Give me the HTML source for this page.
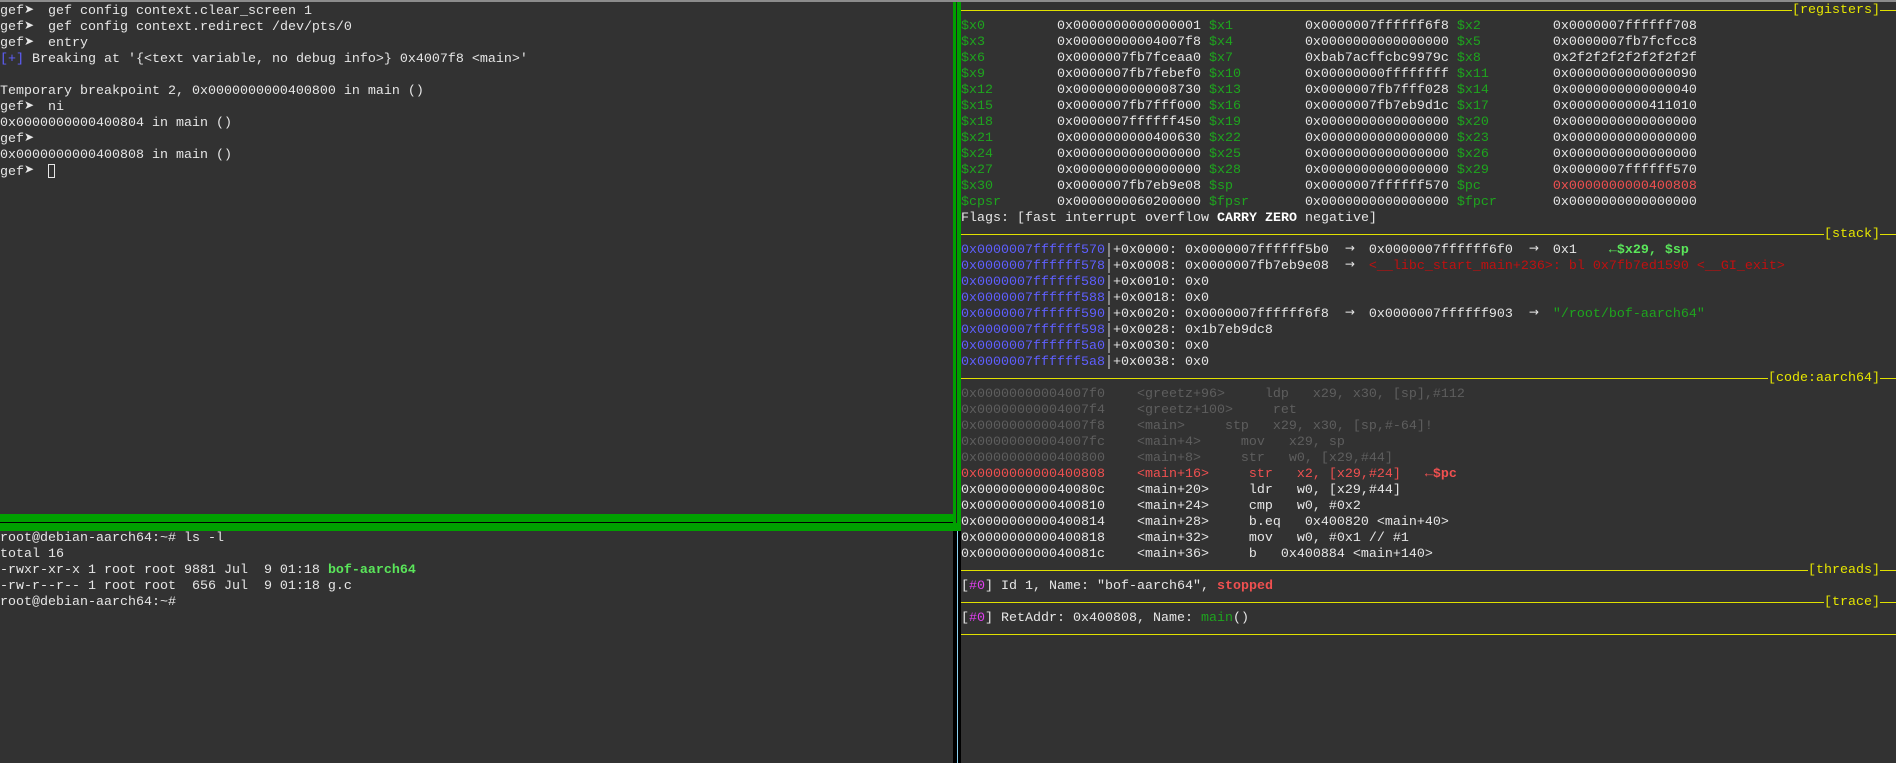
<!DOCTYPE html>
<html><head><meta charset="utf-8">
<style>
html,body{margin:0;padding:0;background:#323232;}
body{width:1896px;height:763px;position:relative;overflow:hidden;font-family:"Liberation Mono","DejaVu Sans Mono",monospace;font-size:13.333px;line-height:16px;color:#e6e6e6;}
.topbar{position:absolute;left:0;top:0;width:1896px;height:2px;background:#8c8c8c;}
pre{margin:0;font:inherit;white-space:pre;position:absolute;}
.g{color:#1ea51e}
.G{color:#5ae65a;font-weight:bold}
.b{color:#5f5fff}
.r{color:#f05050}
.R{color:#f05050;font-weight:bold}
.dr{color:#c01010}
.gr{color:#5e5e5e}
.m{color:#e040f0}
.bold{font-weight:bold;color:#fff}
.row{position:absolute;left:961px;width:935px;height:16px;overflow:hidden;white-space:pre;}
.hdr .ln{position:absolute;left:0;top:7px;width:935px;height:1px;background:#e0e000;}
.hdr .lab{position:absolute;right:16px;top:0;color:#e6e600;background:#323232;}
.cur{display:inline-block;width:7px;height:14px;border:1px solid #e6e6e6;box-sizing:border-box;vertical-align:-3px;}
.ar,.arr{display:inline-block;width:8px;height:16px;line-height:16px;vertical-align:top;position:relative;top:-3px;overflow:visible;font-family:"DejaVu Sans",sans-serif;font-size:12px;text-align:center;}
.ar{font-weight:bold;text-align:left;top:-3px;}
</style></head><body>
<div class="topbar"></div>

<pre style="left:0;top:4px;">gef<span class="ar">➤</span>  gef config context.clear_screen 1
gef<span class="ar">➤</span>  gef config context.redirect /dev/pts/0
gef<span class="ar">➤</span>  entry
<span class="b">[+]</span> Breaking at '{&lt;text variable, no debug info&gt;} 0x4007f8 &lt;main&gt;'

Temporary breakpoint 2, 0x0000000000400800 in main ()
gef<span class="ar">➤</span>  ni
0x0000000000400804 in main ()
gef<span class="ar">➤</span>  
0x0000000000400808 in main ()
gef<span class="ar">➤</span>  <span class="cur"></span></pre>

<div style="position:absolute;left:0;top:514px;width:953px;height:8px;background:#00a000"></div>
<div style="position:absolute;left:0;top:522px;width:956px;height:1px;background:#000"></div>
<div style="position:absolute;left:0;top:523px;width:961px;height:8px;background:#00a000"></div>

<div style="position:absolute;left:953px;top:2px;width:3px;height:521px;background:#00a000"></div>
<div style="position:absolute;left:956px;top:2px;width:1px;height:521px;background:#222"></div>
<div style="position:absolute;left:957px;top:2px;width:4px;height:529px;background:#00a000"></div>
<div style="position:absolute;left:953px;top:531px;width:8px;height:232px;background:#000"></div>
<div style="position:absolute;left:956.5px;top:531px;width:1px;height:232px;background:#8ad0f0"></div>

<pre style="left:0;top:531px;">root@debian-aarch64:~# ls -l
total 16
-rwxr-xr-x 1 root root 9881 Jul  9 01:18 <span class="G">bof-aarch64</span>
-rw-r--r-- 1 root root  656 Jul  9 01:18 g.c
root@debian-aarch64:~# </pre>

<div class="row hdr" style="top:3px"><div class="ln"></div><span class="lab">[registers]</span></div>
<div class="row" style="top:19px"><span class="g">$x0         </span>0x0000000000000001 <span class="g">$x1         </span>0x0000007ffffff6f8 <span class="g">$x2         </span>0x0000007ffffff708</div>
<div class="row" style="top:35px"><span class="g">$x3         </span>0x00000000004007f8 <span class="g">$x4         </span>0x0000000000000000 <span class="g">$x5         </span>0x0000007fb7fcfcc8</div>
<div class="row" style="top:51px"><span class="g">$x6         </span>0x0000007fb7fceaa0 <span class="g">$x7         </span>0xbab7acffcbc9979c <span class="g">$x8         </span>0x2f2f2f2f2f2f2f2f</div>
<div class="row" style="top:67px"><span class="g">$x9         </span>0x0000007fb7febef0 <span class="g">$x10        </span>0x00000000ffffffff <span class="g">$x11        </span>0x0000000000000090</div>
<div class="row" style="top:83px"><span class="g">$x12        </span>0x0000000000008730 <span class="g">$x13        </span>0x0000007fb7fff028 <span class="g">$x14        </span>0x0000000000000040</div>
<div class="row" style="top:99px"><span class="g">$x15        </span>0x0000007fb7fff000 <span class="g">$x16        </span>0x0000007fb7eb9d1c <span class="g">$x17        </span>0x0000000000411010</div>
<div class="row" style="top:115px"><span class="g">$x18        </span>0x0000007ffffff450 <span class="g">$x19        </span>0x0000000000000000 <span class="g">$x20        </span>0x0000000000000000</div>
<div class="row" style="top:131px"><span class="g">$x21        </span>0x0000000000400630 <span class="g">$x22        </span>0x0000000000000000 <span class="g">$x23        </span>0x0000000000000000</div>
<div class="row" style="top:147px"><span class="g">$x24        </span>0x0000000000000000 <span class="g">$x25        </span>0x0000000000000000 <span class="g">$x26        </span>0x0000000000000000</div>
<div class="row" style="top:163px"><span class="g">$x27        </span>0x0000000000000000 <span class="g">$x28        </span>0x0000000000000000 <span class="g">$x29        </span>0x0000007ffffff570</div>
<div class="row" style="top:179px"><span class="g">$x30        </span>0x0000007fb7eb9e08 <span class="g">$sp         </span>0x0000007ffffff570 <span class="g">$pc         </span><span class="r">0x0000000000400808</span></div>
<div class="row" style="top:195px"><span class="g">$cpsr       </span>0x0000000060200000 <span class="g">$fpsr       </span>0x0000000000000000 <span class="g">$fpcr       </span>0x0000000000000000</div>
<div class="row" style="top:211px">Flags: [fast interrupt overflow <span class="bold">CARRY</span> <span class="bold">ZERO</span> negative]</div>

<div class="row hdr" style="top:227px"><div class="ln"></div><span class="lab">[stack]</span></div>
<div class="row" style="top:243px"><span class="b">0x0000007ffffff570</span>│+0x0000: 0x0000007ffffff5b0  <span class="arr">→</span>  0x0000007ffffff6f0  <span class="arr">→</span>  0x1    <span class="G">←$x29, $sp</span></div>
<div class="row" style="top:259px"><span class="b">0x0000007ffffff578</span>│+0x0008: 0x0000007fb7eb9e08  <span class="arr">→</span>  <span class="dr">&lt;__libc_start_main+236&gt;: bl 0x7fb7ed1590 &lt;__GI_exit&gt;</span></div>
<div class="row" style="top:275px"><span class="b">0x0000007ffffff580</span>│+0x0010: 0x0</div>
<div class="row" style="top:291px"><span class="b">0x0000007ffffff588</span>│+0x0018: 0x0</div>
<div class="row" style="top:307px"><span class="b">0x0000007ffffff590</span>│+0x0020: 0x0000007ffffff6f8  <span class="arr">→</span>  0x0000007ffffff903  <span class="arr">→</span>  <span class="g">"/root/bof-aarch64"</span></div>
<div class="row" style="top:323px"><span class="b">0x0000007ffffff598</span>│+0x0028: 0x1b7eb9dc8</div>
<div class="row" style="top:339px"><span class="b">0x0000007ffffff5a0</span>│+0x0030: 0x0</div>
<div class="row" style="top:355px"><span class="b">0x0000007ffffff5a8</span>│+0x0038: 0x0</div>

<div class="row hdr" style="top:371px"><div class="ln"></div><span class="lab">[code:aarch64]</span></div>
<div class="row gr" style="top:387px">0x00000000004007f0    &lt;greetz+96&gt;     ldp   x29, x30, [sp],#112</div>
<div class="row gr" style="top:403px">0x00000000004007f4    &lt;greetz+100&gt;     ret</div>
<div class="row gr" style="top:419px">0x00000000004007f8    &lt;main&gt;     stp   x29, x30, [sp,#-64]!</div>
<div class="row gr" style="top:435px">0x00000000004007fc    &lt;main+4&gt;     mov   x29, sp</div>
<div class="row gr" style="top:451px">0x0000000000400800    &lt;main+8&gt;     str   w0, [x29,#44]</div>
<div class="row r" style="top:467px">0x0000000000400808    &lt;main+16&gt;     str   x2, [x29,#24]   <span class="R">←$pc</span></div>
<div class="row" style="top:483px">0x000000000040080c    &lt;main+20&gt;     ldr   w0, [x29,#44]</div>
<div class="row" style="top:499px">0x0000000000400810    &lt;main+24&gt;     cmp   w0, #0x2</div>
<div class="row" style="top:515px">0x0000000000400814    &lt;main+28&gt;     b.eq   0x400820 &lt;main+40&gt;</div>
<div class="row" style="top:531px">0x0000000000400818    &lt;main+32&gt;     mov   w0, #0x1 // #1</div>
<div class="row" style="top:547px">0x000000000040081c    &lt;main+36&gt;     b   0x400884 &lt;main+140&gt;</div>

<div class="row hdr" style="top:563px"><div class="ln"></div><span class="lab">[threads]</span></div>
<div class="row" style="top:579px">[<span class="m">#0</span>] Id 1, Name: "bof-aarch64", <span class="R">stopped</span></div>
<div class="row hdr" style="top:595px"><div class="ln"></div><span class="lab">[trace]</span></div>
<div class="row" style="top:611px">[<span class="m">#0</span>] RetAddr: 0x400808, Name: <span class="g">main</span>()</div>
<div class="row hdr" style="top:627px"><div class="ln"></div></div>
</body></html>
